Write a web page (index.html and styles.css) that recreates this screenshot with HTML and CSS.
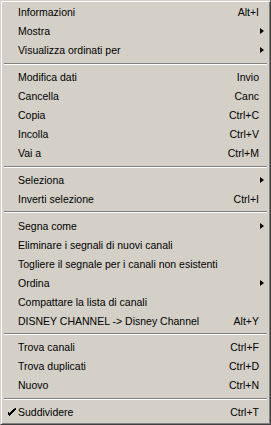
FILE: index.html
```html
<!DOCTYPE html>
<html lang="it">
<head>
    <meta charset="UTF-8">
    <title>Menu</title>
    <link rel="stylesheet" href="styles.css">
</head>
<body>

<div class="menu">
    <div class="item"><span class="check"></span><span class="label">Informazioni</span><span class="key">Alt+I</span><span class="sub"></span></div>
    <div class="item"><span class="check"></span><span class="label">Mostra</span><span class="key"></span><span class="sub"><i class="arrow"></i></span></div>
    <div class="item"><span class="check"></span><span class="label">Visualizza ordinati per</span><span class="key"></span><span class="sub"><i class="arrow"></i></span></div>
    <div class="sep"></div>
    <div class="item"><span class="check"></span><span class="label">Modifica dati</span><span class="key">Invio</span><span class="sub"></span></div>
    <div class="item"><span class="check"></span><span class="label">Cancella</span><span class="key">Canc</span><span class="sub"></span></div>
    <div class="item"><span class="check"></span><span class="label">Copia</span><span class="key">Ctrl+C</span><span class="sub"></span></div>
    <div class="item"><span class="check"></span><span class="label">Incolla</span><span class="key">Ctrl+V</span><span class="sub"></span></div>
    <div class="item"><span class="check"></span><span class="label">Vai a</span><span class="key">Ctrl+M</span><span class="sub"></span></div>
    <div class="sep"></div>
    <div class="item"><span class="check"></span><span class="label">Seleziona</span><span class="key"></span><span class="sub"><i class="arrow"></i></span></div>
    <div class="item"><span class="check"></span><span class="label">Inverti selezione</span><span class="key">Ctrl+I</span><span class="sub"></span></div>
    <div class="sep"></div>
    <div class="item"><span class="check"></span><span class="label">Segna come</span><span class="key"></span><span class="sub"><i class="arrow"></i></span></div>
    <div class="item"><span class="check"></span><span class="label">Eliminare i segnali di nuovi canali</span><span class="key"></span><span class="sub"></span></div>
    <div class="item"><span class="check"></span><span class="label">Togliere il segnale per i canali non esistenti</span><span class="key"></span><span class="sub"></span></div>
    <div class="item"><span class="check"></span><span class="label">Ordina</span><span class="key"></span><span class="sub"><i class="arrow"></i></span></div>
    <div class="item"><span class="check"></span><span class="label">Compattare la lista di canali</span><span class="key"></span><span class="sub"></span></div>
    <div class="item"><span class="check"></span><span class="label">DISNEY CHANNEL -&gt; Disney Channel</span><span class="key">Alt+Y</span><span class="sub"></span></div>
    <div class="sep"></div>
    <div class="item"><span class="check"></span><span class="label">Trova canali</span><span class="key">Ctrl+F</span><span class="sub"></span></div>
    <div class="item"><span class="check"></span><span class="label">Trova duplicati</span><span class="key">Ctrl+D</span><span class="sub"></span></div>
    <div class="item"><span class="check"></span><span class="label">Nuovo</span><span class="key">Ctrl+N</span><span class="sub"></span></div>
    <div class="sep"></div>
    <div class="item">
        <span class="check">
            <svg width="8" height="8" viewBox="0 0 8 8"><path d="M7 0h1v2h-1v1h-1v1h-1v1h-1v1h-1v1h-1v1h-1v-1h-1v-1h-1v-3h1v1h1v1h1v-1h1v-1h1v-1h1v-1h1z" fill="#000"/></svg>
        </span><span class="label">Suddividere</span><span class="key">Ctrl+T</span><span class="sub"></span>
    </div>
</div>

</body>
</html>
```

FILE: styles.css
```css
body {
    margin: 0;
    padding: 0;
    background-color: #d4d0c8;
}

.menu {
    width: 271px;
    height: 425px;
    box-sizing: border-box;
    background-color: #d4d0c8;
    border: 1px solid;
    border-color: #d4d0c8 #404040 #404040 #d4d0c8;
    box-shadow: inset 1px 1px 0 #ffffff, inset -1px -1px 0 #808080;
    padding: 2px;
    font-family: "Liberation Sans", Arial, sans-serif;
    font-size: 10.5px;
    color: #000;
}

.item {
    display: flex;
    align-items: center;
    height: 18.95px;
    white-space: nowrap;
}

.check {
    width: 15px;
    display: flex;
    justify-content: flex-end;
    padding-right: 2px;
    box-sizing: border-box;
}

.check svg {
    display: block;
}

.label {
    flex: 1;
}

.key {
    text-align: right;
}

.sub {
    width: 9px;
    display: flex;
    align-items: center;
}

.arrow {
    display: block;
    width: 0;
    height: 0;
    margin-left: 1px;
    border-top: 3.5px solid transparent;
    border-bottom: 3.5px solid transparent;
    border-left: 4px solid #000;
}

.sep {
    height: 8px;
    display: flex;
    align-items: center;
    padding: 0 1px;
}

.sep::before {
    content: "";
    flex: 1;
    height: 1px;
    border-bottom: 1px solid #ffffff;
    background-color: #808080;
}
```
